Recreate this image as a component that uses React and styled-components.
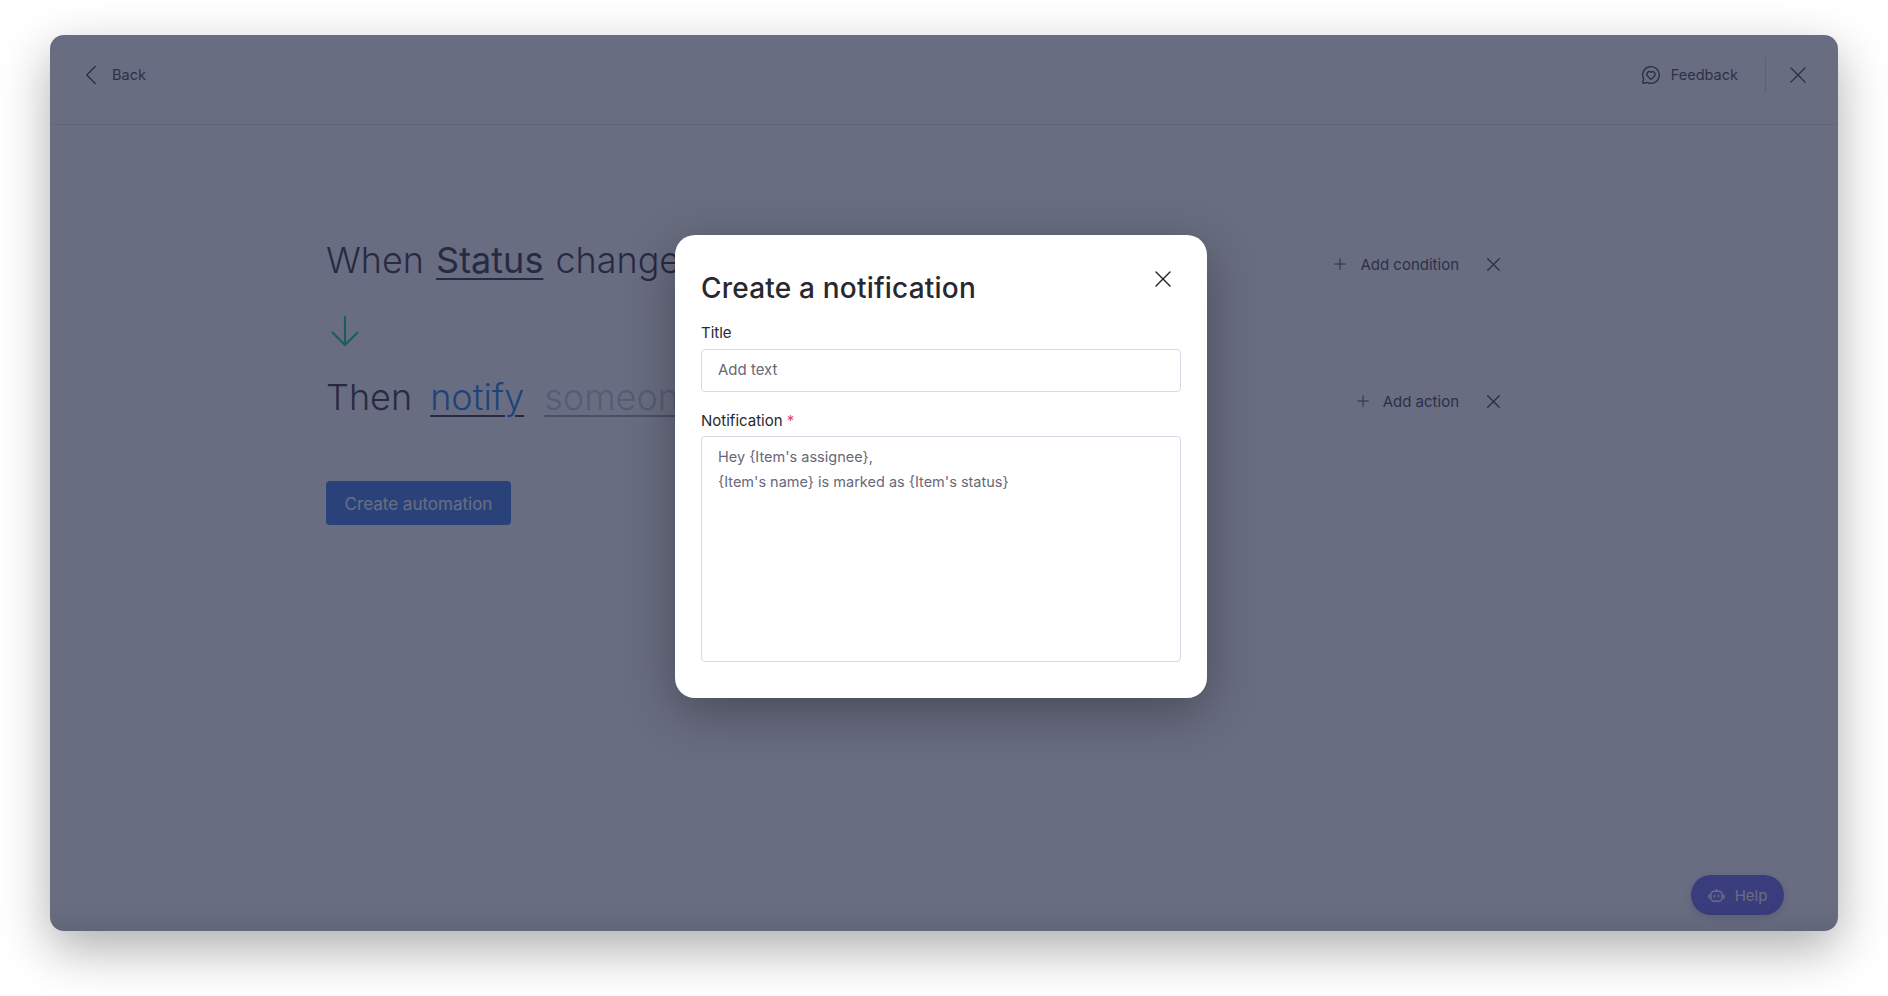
import { createGlobalStyle } from "styled-components";
import styled from "styled-components";
import { X, Plus, ChevronLeft, MessageCircleHeart } from "lucide-react";

const GlobalStyle = createGlobalStyle`
  html, body {
    margin: 0;
    background: #fff;
    font-family: "Inter", "Liberation Sans", sans-serif;
  }
  * { box-sizing: border-box; }
`;

const Page = styled.div`
  width: 1888px;
  height: 996px;
  padding: 35px 50px 65px;
  overflow: hidden;
`;

const AppWindow = styled.div`
  position: relative;
  height: 896px;
  background: #fff;
  border-radius: 14px;
  overflow: hidden;
  box-shadow: 0 18px 50px rgba(0, 0, 0, 0.32);
  color: #323338;
`;

const Header = styled.header`
  height: 90px;
  padding: 0 26px 10px 24px;
  display: flex;
  align-items: center;
  justify-content: space-between;
  border-bottom: 1px solid #e6e0e6;
`;

const HeaderLink = styled.div`
  display: flex;
  align-items: center;
  gap: ${(p) => p.$gap}px;
  font-size: 14.5px;
`;

const HeaderRight = styled.div`
  display: flex;
  align-items: center;
`;

const Divider = styled.div`
  width: 1px;
  height: 35px;
  margin: 0 18px 0 27px;
  background: #d0d4e4;
`;

const Content = styled.main`
  padding: 110px 333px 0 276px;
`;

const Row = styled.div`
  height: 54px;
  display: flex;
  align-items: center;
  justify-content: space-between;
`;

const Sentence = styled.div`
  display: flex;
  gap: ${(p) => p.$gap}px;
  padding-bottom: 4px;
  color: #1f2130;
  font-size: 36px;
  font-weight: 300;
  white-space: nowrap;
`;

const Token = styled.span`
  margin-left: ${(p) => p.$left || 0}px;
  color: ${(p) => p.$color || "#1f2130"};
  font-weight: ${(p) => p.$weight || 300};
  text-decoration: underline;
  text-decoration-color: ${(p) => p.$line || "#1f2130"};
  text-decoration-thickness: 2px;
  text-underline-offset: 5px;
`;

const RowActions = styled.div`
  display: flex;
  align-items: center;
  padding-top: 4px;
  font-size: 15px;
`;

const AddButton = styled.div`
  display: flex;
  align-items: center;
  gap: 11px;
  margin-right: 23px;
`;

const ArrowRow = styled.div`
  height: 83px;
  padding-left: 5px;
  display: flex;
  align-items: center;
  color: #00c875;
`;

const CreateButton = styled.button`
  display: block;
  width: 185px;
  height: 44px;
  margin-top: 55px;
  padding: 1px 0 0;
  border: none;
  border-radius: 4px;
  background: #2a6fe8;
  color: #fff;
  font-family: inherit;
  font-size: 17px;
`;

const HelpButton = styled.div`
  position: absolute;
  right: 54px;
  bottom: 16px;
  width: 93px;
  height: 40px;
  border-radius: 20px;
  display: flex;
  align-items: center;
  justify-content: center;
  gap: 10px;
  background: #5f5af0;
  color: #fff;
  font-size: 15px;
  box-shadow: 0 2px 8px rgba(0, 0, 0, 0.2);
`;

const Overlay = styled.div`
  position: absolute;
  inset: 0;
  padding: 200px 0 0 625px;
  background: rgba(41, 47, 76, 0.7);
  box-shadow: inset 0 -30px 30px -30px rgba(0, 0, 0, 0.14);
`;

const Modal = styled.div`
  position: relative;
  width: 532px;
  height: 463px;
  padding: 36px 26px 36px;
  background: #fff;
  border-radius: 20px;
  box-shadow: 0 14px 50px rgba(0, 0, 0, 0.32);
`;

const ModalTitle = styled.h2`
  margin: 0 0 18px;
  font-size: 28px;
  line-height: 34px;
  font-weight: 500;
  letter-spacing: 0.2px;
  color: #28282f;
`;

const CloseButton = styled.div`
  position: absolute;
  top: 30px;
  right: 30px;
  display: flex;
  color: #1f1f24;
`;

const Label = styled.label`
  display: block;
  margin: ${(p) => p.$top || 0}px 0 ${(p) => p.$bottom}px;
  font-size: 15px;
  line-height: 20px;
  color: #28282f;
`;

const Required = styled.span`
  color: #e2445c;
`;

const TextInput = styled.input`
  display: block;
  width: 100%;
  height: 43px;
  padding: 0 16px 2px;
  border: 1px solid #d8d9e4;
  border-radius: 4px;
  outline: none;
  font-family: inherit;
  font-size: 15px;
  color: #676879;
  &::placeholder { color: #676879; opacity: 1; }
`;

const TextArea = styled.textarea`
  display: block;
  width: 100%;
  height: 226px;
  padding: 7px 16px;
  border: 1px solid #d8d9e4;
  border-radius: 4px;
  outline: none;
  resize: none;
  font-family: inherit;
  font-size: 14.5px;
  line-height: 25px;
  color: #676879;
`;

function RobotIcon() {
  return (
    <svg width="17" height="17" viewBox="0 0 17 17" fill="none" stroke="currentColor" strokeWidth="1.5">
      <rect x="2.8" y="4.2" width="11.4" height="10" rx="3.5" />
      <path d="M8.5 4.2V2.4M1 8v3M16 8v3" strokeLinecap="round" />
      <path d="M6.5 8.2v1.6M10.5 8.2v1.6" strokeLinecap="round" />
    </svg>
  );
}

function DownArrow() {
  return (
    <svg width="28" height="30" viewBox="0 0 28 30" fill="none" stroke="currentColor" strokeWidth="2.2" strokeLinecap="round" strokeLinejoin="round">
      <path d="M14 1v28M1.5 16.5 14 29 26.5 16.5" />
    </svg>
  );
}

export default function App() {
  return (
    <Page>
      <GlobalStyle />
      <AppWindow>
        <Header>
          <HeaderLink $gap={4}>
            <ChevronLeft size={34} strokeWidth={1} />
            Back
          </HeaderLink>
          <HeaderRight>
            <HeaderLink $gap={10}>
              <MessageCircleHeart size={20} strokeWidth={1.7} />
              Feedback
            </HeaderLink>
            <Divider />
            <X size={28} strokeWidth={1.2} />
          </HeaderRight>
        </Header>
        <Content>
          <Row>
            <Sentence $gap={12}>
              When
              <Token $weight={400}>Status</Token>
              changes
            </Sentence>
            <RowActions>
              <AddButton>
                <Plus size={18} strokeWidth={1.4} />
                Add condition
              </AddButton>
              <X size={23} strokeWidth={1.4} />
            </RowActions>
          </Row>
          <ArrowRow>
            <DownArrow />
          </ArrowRow>
          <Row>
            <Sentence $gap={18}>
              Then
              <Token $color="#0073ea">notify</Token>
              <Token $color="#c3c6d4" $line="#9699a6" $left={2}>someone</Token>
            </Sentence>
            <RowActions>
              <AddButton>
                <Plus size={18} strokeWidth={1.4} />
                Add action
              </AddButton>
              <X size={23} strokeWidth={1.4} />
            </RowActions>
          </Row>
          <CreateButton>Create automation</CreateButton>
        </Content>
        <HelpButton>
          <RobotIcon />
          Help
        </HelpButton>
        <Overlay>
          <Modal>
            <ModalTitle>Create a notification</ModalTitle>
            <CloseButton>
              <X size={28} strokeWidth={1.2} />
            </CloseButton>
            <Label $bottom={6}>Title</Label>
            <TextInput placeholder="Add text" />
            <Label $top={19} $bottom={5}>
              Notification <Required>*</Required>
            </Label>
            <TextArea
              readOnly
              value={"Hey {Item's assignee},\n{Item's name} is marked as {Item's status}"}
            />
          </Modal>
        </Overlay>
      </AppWindow>
    </Page>
  );
}
